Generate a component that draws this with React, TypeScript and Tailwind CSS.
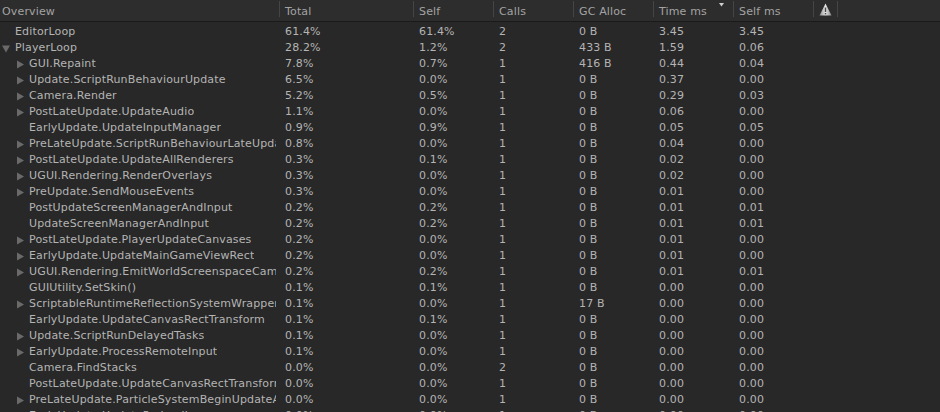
type Row = {
  name: string;
  depth: number;
  arrow: 'none' | 'right' | 'down';
  total: string;
  self: string;
  calls: string;
  gc: string;
  time: string;
  selfMs: string;
};

const r = (
  name: string,
  depth: number,
  arrow: Row['arrow'],
  total: string,
  self: string,
  calls: string,
  gc: string,
  time: string,
  selfMs: string
): Row => ({ name, depth, arrow, total, self, calls, gc, time, selfMs });

const rows: Row[] = [
  r('EditorLoop', 0, 'none', '61.4%', '61.4%', '2', '0 B', '3.45', '3.45'),
  r('PlayerLoop', 0, 'down', '28.2%', '1.2%', '2', '433 B', '1.59', '0.06'),
  r('GUI.Repaint', 1, 'right', '7.8%', '0.7%', '1', '416 B', '0.44', '0.04'),
  r('Update.ScriptRunBehaviourUpdate', 1, 'right', '6.5%', '0.0%', '1', '0 B', '0.37', '0.00'),
  r('Camera.Render', 1, 'right', '5.2%', '0.5%', '1', '0 B', '0.29', '0.03'),
  r('PostLateUpdate.UpdateAudio', 1, 'right', '1.1%', '0.0%', '1', '0 B', '0.06', '0.00'),
  r('EarlyUpdate.UpdateInputManager', 1, 'none', '0.9%', '0.9%', '1', '0 B', '0.05', '0.05'),
  r('PreLateUpdate.ScriptRunBehaviourLateUpdate', 1, 'right', '0.8%', '0.0%', '1', '0 B', '0.04', '0.00'),
  r('PostLateUpdate.UpdateAllRenderers', 1, 'right', '0.3%', '0.1%', '1', '0 B', '0.02', '0.00'),
  r('UGUI.Rendering.RenderOverlays', 1, 'right', '0.3%', '0.0%', '1', '0 B', '0.02', '0.00'),
  r('PreUpdate.SendMouseEvents', 1, 'right', '0.3%', '0.0%', '1', '0 B', '0.01', '0.00'),
  r('PostUpdateScreenManagerAndInput', 1, 'none', '0.2%', '0.2%', '1', '0 B', '0.01', '0.01'),
  r('UpdateScreenManagerAndInput', 1, 'none', '0.2%', '0.2%', '1', '0 B', '0.01', '0.01'),
  r('PostLateUpdate.PlayerUpdateCanvases', 1, 'right', '0.2%', '0.0%', '1', '0 B', '0.01', '0.00'),
  r('EarlyUpdate.UpdateMainGameViewRect', 1, 'right', '0.2%', '0.0%', '1', '0 B', '0.01', '0.00'),
  r('UGUI.Rendering.EmitWorldScreenspaceCameraGeometry', 1, 'right', '0.2%', '0.2%', '1', '0 B', '0.01', '0.01'),
  r('GUIUtility.SetSkin()', 1, 'none', '0.1%', '0.1%', '1', '0 B', '0.00', '0.00'),
  r('ScriptableRuntimeReflectionSystemWrapper.Tick', 1, 'right', '0.1%', '0.0%', '1', '17 B', '0.00', '0.00'),
  r('EarlyUpdate.UpdateCanvasRectTransform', 1, 'none', '0.1%', '0.1%', '1', '0 B', '0.00', '0.00'),
  r('Update.ScriptRunDelayedTasks', 1, 'right', '0.1%', '0.0%', '1', '0 B', '0.00', '0.00'),
  r('EarlyUpdate.ProcessRemoteInput', 1, 'right', '0.1%', '0.0%', '1', '0 B', '0.00', '0.00'),
  r('Camera.FindStacks', 1, 'none', '0.0%', '0.0%', '2', '0 B', '0.00', '0.00'),
  r('PostLateUpdate.UpdateCanvasRectTransform', 1, 'none', '0.0%', '0.0%', '1', '0 B', '0.00', '0.00'),
  r('PreLateUpdate.ParticleSystemBeginUpdateAll', 1, 'right', '0.0%', '0.0%', '1', '0 B', '0.00', '0.00'),
  r('EarlyUpdate.UpdatePreloading', 1, 'right', '0.0%', '0.0%', '1', '0 B', '0.00', '0.00'),
];

const grid = 'grid grid-cols-[279px_134px_80px_80px_80px_80px_80px_25px_1fr]';

const Arrow = ({ dir }: { dir: Row['arrow'] }) => {
  if (dir === 'none') return <span className="w-[14px] shrink-0" />;
  return (
    <span className="w-[14px] shrink-0 flex items-center pl-[1px]">
      <svg width="8" height="9" viewBox="0 0 8 9">
        {dir === 'right' ? (
          <polygon points="1,0.5 8,4.5 1,8.5" fill="#6a6a6a" />
        ) : (
          <polygon points="0,1.5 8,1.5 4,8.5" fill="#6a6a6a" />
        )}
      </svg>
    </span>
  );
};

const HeaderCell = ({ label, first }: { label?: string; first?: boolean }) => (
  <div className={`flex items-start h-full overflow-hidden whitespace-nowrap ${first ? 'pl-[2px]' : ''}`}>
    {!first && <span className="mt-[1px] mr-[5px] h-[16px] w-px shrink-0 bg-[#454545]" />}
    <span className="pt-[4px] leading-[16px]">{label}</span>
  </div>
);

export default function App() {
  return (
    <div
      className="w-[940px] h-[412px] overflow-hidden bg-[#282828] text-[11px] text-[#b4b4b4] tracking-[0.15px]"
      style={{ fontFamily: '"DejaVu Sans", Verdana, sans-serif' }}
    >
      <div className={`${grid} h-[22px] bg-[#2d2d2d] border-b border-[#1a1a1a] text-[#a3a3a3]`}>
        <HeaderCell label="Overview" first />
        <HeaderCell label="Total" />
        <HeaderCell label="Self" />
        <HeaderCell label="Calls" />
        <HeaderCell label="GC Alloc" />
        <div className="relative h-full">
          <HeaderCell label="Time ms" />
          <svg className="absolute right-[9px] top-[3px]" width="5" height="4" viewBox="0 0 5 4">
            <polygon points="0,0 5,0 2.5,3.5" fill="#cfcfcf" />
          </svg>
        </div>
        <HeaderCell label="Self ms" />
        <div className="flex items-start h-full">
          <span className="mt-[1px] h-[16px] w-px shrink-0 bg-[#454545]" />
          <div className="flex-1 flex justify-center pt-[3px]">
            <svg width="13" height="13" viewBox="0 0 13 13">
              <defs>
                <linearGradient id="wg" x1="0" y1="0" x2="1" y2="0">
                  <stop offset="0" stopColor="#8a8a8a" />
                  <stop offset="0.5" stopColor="#e6e6e6" />
                  <stop offset="1" stopColor="#8a8a8a" />
                </linearGradient>
              </defs>
              <polygon points="6.5,0.5 12.5,12.5 0.5,12.5" fill="url(#wg)" />
              <rect x="5.8" y="4.5" width="1.4" height="4.5" fill="#4a4a4a" />
              <rect x="5.8" y="10" width="1.4" height="1.4" fill="#4a4a4a" />
            </svg>
          </div>
          <span className="mt-[1px] h-[16px] w-px shrink-0 bg-[#454545]" />
        </div>
        <div />
      </div>
      <div className="pt-[2px]">
        {rows.map((row, i) => (
          <div key={i} className={`${grid} h-[16px] leading-[16px]`}>
            <div
              className="flex items-center min-w-0 overflow-hidden whitespace-nowrap pr-[3px]"
              style={{ paddingLeft: 1 + row.depth * 14 }}
            >
              <Arrow dir={row.arrow} />
              <span className="min-w-0 overflow-hidden">{row.name}</span>
            </div>
            <div className="pl-[6px] whitespace-nowrap">{row.total}</div>
            <div className="pl-[6px] whitespace-nowrap">{row.self}</div>
            <div className="pl-[6px] whitespace-nowrap">{row.calls}</div>
            <div className="pl-[6px] whitespace-nowrap">{row.gc}</div>
            <div className="pl-[6px] whitespace-nowrap">{row.time}</div>
            <div className="pl-[6px] whitespace-nowrap">{row.selfMs}</div>
            <div />
            <div />
          </div>
        ))}
      </div>
    </div>
  );
}
